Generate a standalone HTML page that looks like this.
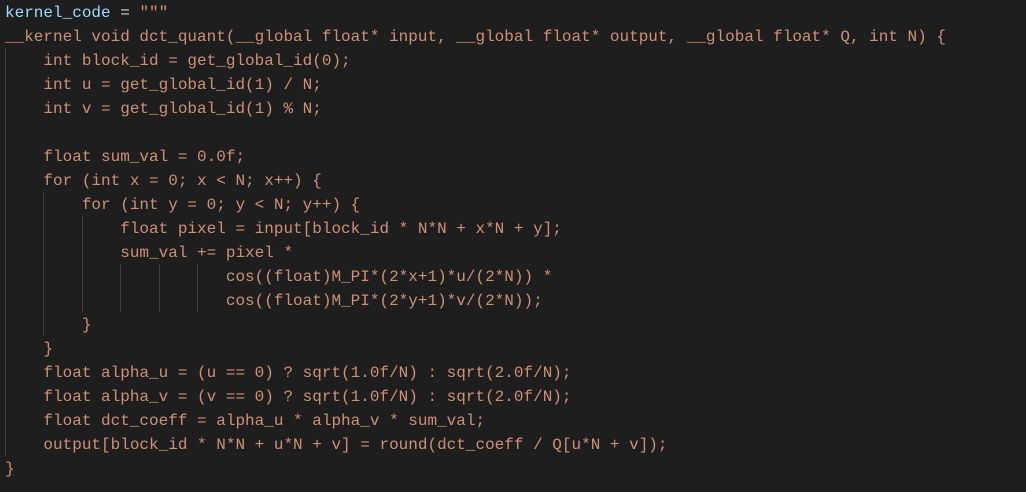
<!DOCTYPE html>
<html><head><style>
html,body{margin:0;padding:0;background:#1e1e1e;width:1026px;height:492px;overflow:hidden}
pre{margin:0;position:absolute;left:5px;top:1px;font-family:"Liberation Mono",monospace;font-size:16px;line-height:24px;color:#ce9178}
.b{color:#9cdcfe}
.g{position:absolute;width:1px;background:#404040}
</style></head><body>
<div class="g" style="left:5px;top:48px;height:408px"></div>
<div class="g" style="left:43px;top:192px;height:144px"></div>
<div class="g" style="left:82px;top:216px;height:96px"></div>
<div class="g" style="left:120px;top:264px;height:48px"></div>
<div class="g" style="left:159px;top:264px;height:48px"></div>
<div class="g" style="left:197px;top:264px;height:48px"></div>
<pre><span class="b">kernel_code</span> <span style="color:#d4d4d4">=</span> """
__kernel void dct_quant(__global float* input, __global float* output, __global float* Q, int N) {
    int block_id = get_global_id(0);
    int u = get_global_id(1) / N;
    int v = get_global_id(1) % N;

    float sum_val = 0.0f;
    for (int x = 0; x &lt; N; x++) {
        for (int y = 0; y &lt; N; y++) {
            float pixel = input[block_id * N*N + x*N + y];
            sum_val += pixel *
                       cos((float)M_PI*(2*x+1)*u/(2*N)) *
                       cos((float)M_PI*(2*y+1)*v/(2*N));
        }
    }
    float alpha_u = (u == 0) ? sqrt(1.0f/N) : sqrt(2.0f/N);
    float alpha_v = (v == 0) ? sqrt(1.0f/N) : sqrt(2.0f/N);
    float dct_coeff = alpha_u * alpha_v * sum_val;
    output[block_id * N*N + u*N + v] = round(dct_coeff / Q[u*N + v]);
}</pre>
</body></html>
